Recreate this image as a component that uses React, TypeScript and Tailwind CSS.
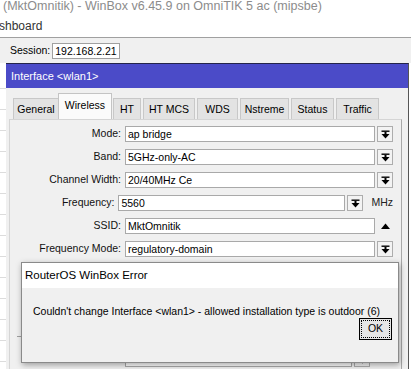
import React from "react"

function DropIcon() {
  return (
    <svg width="9" height="9" viewBox="0 0 9 9">
      <rect x="0.5" y="0.5" width="8" height="1.4" fill="#000" />
      <rect x="3.5" y="2" width="2" height="2" fill="#000" />
      <polygon points="0.5,4 8.5,4 4.5,8.5" fill="#000" />
    </svg>
  )
}

function DropBtn() {
  return (
    <div className="w-[16px] h-[16px] border border-[#adadad] bg-[#f3f3f3] flex items-center justify-center">
      <DropIcon />
    </div>
  )
}

function Field({ label, value, children }: { label: string; value?: string; children?: React.ReactNode }) {
  return (
    <div className="flex items-center h-[16px]">
      <div className="w-[112px] text-right pr-[1px] text-[#111] whitespace-nowrap">{label}</div>
      <div className="ml-[3px] flex-1 flex items-center gap-[2px] pr-[8px]">{children ?? (
        <>
          <div className="flex-1 h-[16px] bg-white border border-[#a9a9a9] px-[2px] leading-[14px]">{value}</div>
          <DropBtn />
        </>
      )}</div>
    </div>
  )
}

const tabs = ["General", "Wireless", "HT", "HT MCS", "WDS", "Nstreme", "Status", "Traffic"]
const tabW = [46, 54, 28, 52, 41, 49, 43, 43]

export default function App() {
  return (
    <div className="w-[411px] h-[369px] overflow-hidden relative bg-white text-[10.5px] text-black" style={{ fontFamily: '"Liberation Sans", Arial, sans-serif' }}>
      <div className="h-[14px] pl-[3px] text-[12.5px] leading-[13px] text-[#8c8c8c] whitespace-nowrap">(MktOmnitik) - WinBox v6.45.9 on OmniTIK 5 ac (mipsbe)</div>
      <div className="h-[23px] text-[12px] leading-[24px] text-[#333] -ml-[1px]">shboard</div>
      <div className="h-[26px] border-t border-[#a0a0a0] bg-[#f0f0f0] flex items-center pl-[10px] gap-[2px]">
        <span>Session:</span>
        <div className="w-[68px] h-[16px] border border-[#a0a0a0] bg-white leading-[14px] px-[2px]">192.168.2.21</div>
      </div>
      <div className="flex">
        <div className="w-[6px] flex flex-col pt-[25px] gap-[20px]">
          {Array.from({ length: 14 }).map((_, i) => (
            <div key={i} className="h-px bg-[#dcdcdc]" />
          ))}
        </div>
        <div className="w-[403px] border-t border-[#24244a] bg-[#f0f0f0] border-r border-r-[#555]">
          <div className="h-[24px] bg-[#4b4bc8] text-white text-[11px] leading-[24px] pl-[5px]">Interface &lt;wlan1&gt;</div>
          <div className="flex items-end pl-[5px] h-[31px]">
            {tabs.map((t, i) =>
              i === 1 ? (
                <div key={t} style={{ width: tabW[i] }} className="h-[26px] -mx-[1px] bg-[#fbfbfb] border border-b-0 border-[#c4c4c4] text-center leading-[22px] relative z-10">{t}</div>
              ) : (
                <div key={t} style={{ width: tabW[i] }} className="h-[21px] ml-[2px] bg-[#e3e3e3] border border-b-0 border-[#c8c8c8] text-center leading-[21px]">{t}</div>
              )
            )}
          </div>
          <div className="ml-[3px] mr-[6px] border border-[#d5d5d5] border-r-[#a8a8a8] bg-[#f0f0f0] pt-[6px] pb-[20px] flex flex-col gap-[7px]">
            <Field label="Mode:" value="ap bridge" />
            <Field label="Band:" value="5GHz-only-AC" />
            <Field label="Channel Width:" value="20/40MHz Ce" />
            <Field label="Frequency:">
              <div className="w-[227px] h-[16px] bg-white border border-[#a9a9a9] px-[2px] leading-[14px]">5560</div>
              <DropBtn />
              <span className="ml-[6px] text-[#222]">MHz</span>
            </Field>
            <Field label="SSID:">
              <div className="flex-1 h-[16px] bg-white border border-[#a9a9a9] px-[2px] leading-[14px]">MktOmnitik</div>
              <div className="w-[16px] flex justify-center">
                <svg width="9" height="6" viewBox="0 0 9 6"><polygon points="0,6 9,6 4.5,0.5" fill="#000" /></svg>
              </div>
            </Field>
            <Field label="Frequency Mode:" value="regulatory-domain" />
            <Field label="" value="" />
            <Field label="" value="" />
            <Field label="" value="" />
            <div className="ml-[7px] mr-[8px] h-px bg-[#a0a0a0] mt-[3px] mb-[7px]" />
            <Field label="">
              <div className="w-[227px] h-[16px] bg-white border border-[#a9a9a9]" />
              <DropBtn />
            </Field>
            <Field label="Default Client Tx Limit:">
              <div className="w-[227px] h-[16px] bg-white border border-[#a9a9a9]" />
              <DropBtn />
            </Field>
          </div>
        </div>
      </div>

      <div className="absolute left-[21px] top-[262px] w-[378px] h-[101px] border border-[#8a8a8a] bg-[#f0f0f0] shadow-[1px_2px_6px_rgba(0,0,0,0.35)] flex flex-col">
        <div className="h-[25px] bg-white pl-[3px] text-[11.5px] leading-[24px]">RouterOS WinBox Error</div>
        <div className="pl-[11px] pt-[16px] h-[27px] leading-[14px] whitespace-nowrap">Couldn't change Interface &lt;wlan1&gt; - allowed installation type is outdoor (6)</div>
        <div className="flex justify-end pr-[6px] pt-[3px]">
          <div className="w-[33px] h-[22px] border border-black bg-[#e6e6e6] p-[1px]">
            <div className="w-full h-full border border-dotted border-black flex items-center justify-center">OK</div>
          </div>
        </div>
      </div>
    </div>
  )
}
